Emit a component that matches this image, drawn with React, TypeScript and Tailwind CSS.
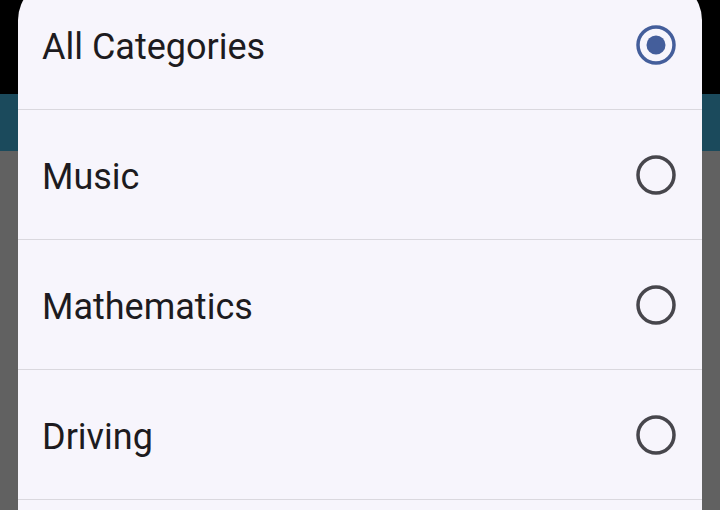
import React from "react";

const items = [
  { label: "All Categories", selected: true },
  { label: "Music", selected: false },
  { label: "Mathematics", selected: false },
  { label: "Driving", selected: false },
];

function Radio({ selected }: { selected: boolean }) {
  return (
    <svg width="44" height="44" viewBox="0 0 44 44" className="shrink-0">
      <circle
        cx="22"
        cy="22"
        r="18"
        fill="none"
        stroke={selected ? "#445e9b" : "#47464c"}
        strokeWidth="3.5"
      />
      {selected && <circle cx="22" cy="22" r="9.5" fill="#445e9b" />}
    </svg>
  );
}

export default function App() {
  return (
    <div className="relative w-[720px] h-[510px] overflow-hidden bg-[#616161]" style={{ fontFamily: "Roboto, sans-serif" }}>
      <div className="flex flex-col">
        <div className="h-[94px] bg-black" />
        <div className="h-[57px] bg-[#1b4a5c]" />
      </div>
      <div className="absolute left-[18px] top-[-20px] w-[684px] h-[560px] rounded-t-[40px] bg-[#f7f5fc] flex flex-col">
        {items.map((it) => (
          <div
            key={it.label}
            className="h-[130px] shrink-0 border-b border-[#dad8de] flex items-center justify-between pl-[24px] pr-[24px]"
          >
            <span className="relative top-[2px] text-[36px] leading-none text-[#1d1b20]">{it.label}</span>
            <Radio selected={it.selected} />
          </div>
        ))}
      </div>
    </div>
  );
}
